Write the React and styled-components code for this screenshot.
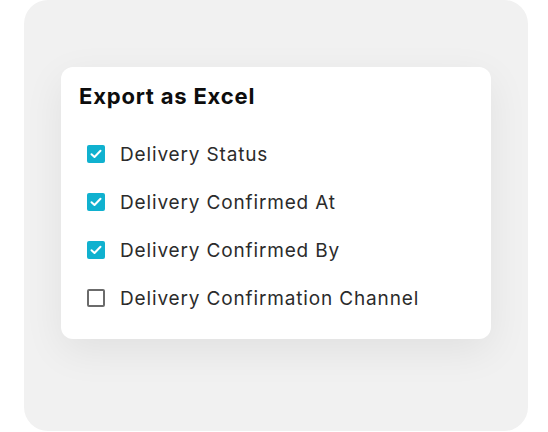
import React, { useState } from 'react';
import styled, { createGlobalStyle } from 'styled-components';

const GlobalStyle = createGlobalStyle`
  html, body {
    margin: 0;
    padding: 0;
    background: #ffffff;
    font-family: Inter, "Noto Sans", sans-serif;
  }
`;

const Backdrop = styled.div`
  margin: 0 20px 0 24px;
  height: 431px;
  background: #f1f1f1;
  border-radius: 24px;
  padding: 67px 0 0 37px;
  box-sizing: border-box;
`;

const Card = styled.div`
  width: 430px;
  height: 272px;
  box-sizing: border-box;
  background: #ffffff;
  border-radius: 12px;
  box-shadow: 0 12px 40px rgba(0, 0, 0, 0.07);
  padding: 15px 18px 17px 18px;
`;

const Title = styled.h2`
  margin: 0 0 20px 0;
  font-size: 22px;
  line-height: 28px;
  font-weight: 700;
  color: #0d0d0d;
  letter-spacing: 0.8px;
`;

const List = styled.div`
  display: flex;
  flex-direction: column;
  padding-left: 8px;
`;

const Row = styled.label`
  display: flex;
  align-items: center;
  gap: 15px;
  height: 48px;
  cursor: pointer;
`;

const Box = styled.span`
  width: 18px;
  height: 18px;
  box-sizing: border-box;
  border-radius: 2px;
  display: flex;
  align-items: center;
  justify-content: center;
  background: ${(p) => (p.$checked ? '#10b1cf' : '#ffffff')};
  border: ${(p) => (p.$checked ? 'none' : '2px solid #6b6b6b')};
`;

const Label = styled.span`
  font-size: 19px;
  color: #2b2b2b;
  letter-spacing: 0.85px;
`;

const fields = [
  { name: 'Delivery Status', checked: true },
  { name: 'Delivery Confirmed At', checked: true },
  { name: 'Delivery Confirmed By', checked: true },
  { name: 'Delivery Confirmation Channel', checked: false },
];

const App = () => {
  const [items, setItems] = useState(fields);

  const toggle = (i) => {
    setItems(items.map((it, j) => (j === i ? { ...it, checked: !it.checked } : it)));
  };

  return (
    <>
      <GlobalStyle />
      <Backdrop>
        <Card>
          <Title>Export as Excel</Title>
          <List>
            {items.map((it, i) => (
              <Row key={it.name} onClick={() => toggle(i)}>
                <Box $checked={it.checked}>
                  {it.checked && (
                    <svg width="12" height="10" viewBox="0 0 12 10">
                      <path d="M1.5 5.2 L4.5 8 L10.5 1.8" fill="none" stroke="#fff" strokeWidth="2" strokeLinecap="round" strokeLinejoin="round" />
                    </svg>
                  )}
                </Box>
                <Label>{it.name}</Label>
              </Row>
            ))}
          </List>
        </Card>
      </Backdrop>
    </>
  );
};

export default App;
